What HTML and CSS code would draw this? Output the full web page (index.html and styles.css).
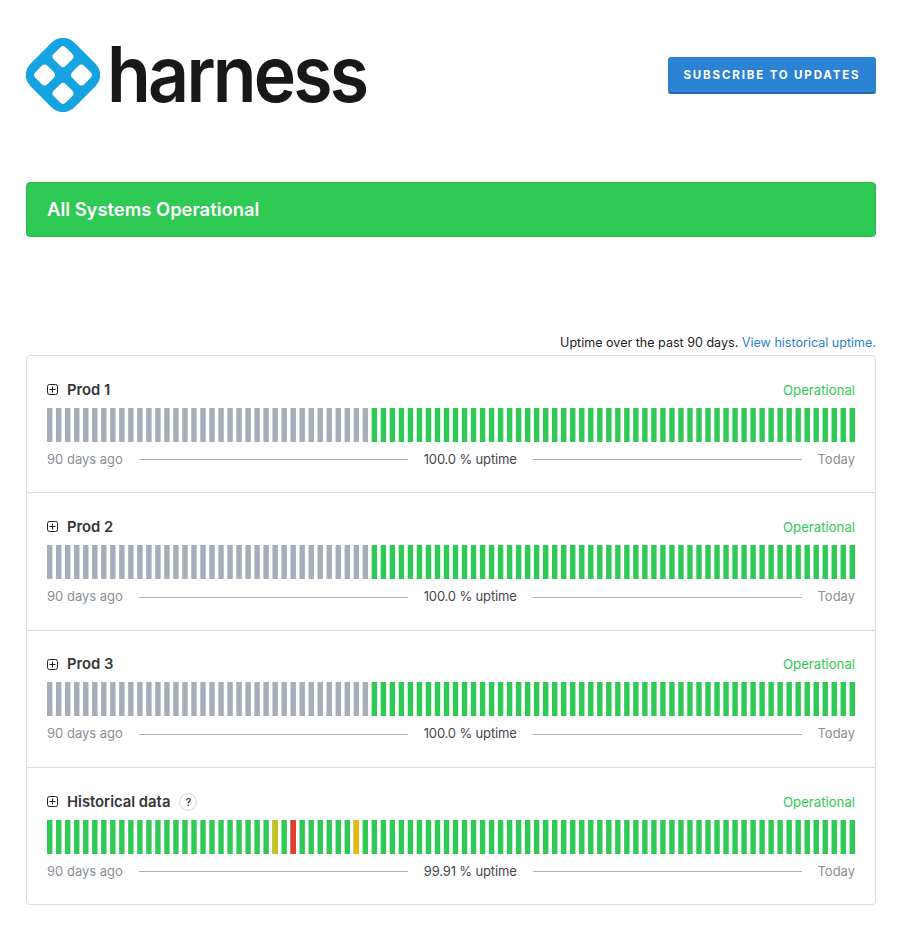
FILE: index.html
```html
<!DOCTYPE html>
<html lang="en">
<head>
<meta charset="utf-8">
<title>Harness Status</title>
<link rel="stylesheet" href="styles.css">
</head>
<body>
<svg class="defs" width="0" height="0" aria-hidden="true">
  <defs>
    <g id="b5"><rect x="0" width="3" height="34"/><rect x="5" width="3" height="34"/><rect x="10" width="3" height="34"/><rect x="15" width="3" height="34"/><rect x="20" width="3" height="34"/></g>
    <g id="b10"><use href="#b5"/><use href="#b5" x="25"/></g>
    <g id="b30"><use href="#b10"/><use href="#b10" x="50"/><use href="#b10" x="100"/></g>
    <g id="b90"><use href="#b30"/><use href="#b30" x="150"/><use href="#b30" x="300"/></g>
    <g id="plus"><rect x="0.5" y="0.5" width="10" height="10" rx="2" fill="none" stroke="#1f2024"/><path d="M5.5 2.5v6M2.5 5.5h6" stroke="#1f2024"/></g>
    <g id="prodbars">
      <g class="grey"><use href="#b30"/><use href="#b5" x="150"/><rect x="175" width="3" height="34"/></g>
      <g class="green"><rect x="180" width="3" height="34"/><rect x="185" width="3" height="34"/><rect x="190" width="3" height="34"/><rect x="195" width="3" height="34"/><use href="#b30" x="200"/><use href="#b10" x="350"/><use href="#b10" x="400"/></g>
    </g>
  </defs>
</svg>
<div class="page">
  <header class="top">
    <div class="logo">
      <svg class="logo-mark" width="74" height="74" viewBox="0 0 74 74">
        <g transform="translate(37 37) rotate(45)">
          <rect x="-31" y="-31" width="62" height="62" rx="16" fill="#16a3e2"/>
          <rect x="-21.5" y="-21.5" width="17" height="17" rx="4" fill="#fff"/>
          <rect x="4.5" y="-21.5" width="17" height="17" rx="4" fill="#fff"/>
          <rect x="-21.5" y="4.5" width="17" height="17" rx="4" fill="#fff"/>
          <rect x="4.5" y="4.5" width="17" height="17" rx="4" fill="#fff"/>
        </g>
      </svg>
      <span class="logo-text">harness</span>
    </div>
    <a class="subscribe" href="#">Subscribe to updates</a>
  </header>

  <div class="banner">All Systems Operational</div>

  <p class="uptime-note">Uptime over the past 90 days. <a href="#">View historical uptime.</a></p>

  <section class="card">
    <article class="row">
      <div class="row-head">
        <svg class="plus" width="11" height="11" viewBox="0 0 11 11"><use href="#plus"/></svg>
        <span class="name">Prod 1</span>
        <span class="status">Operational</span>
      </div>
      <svg class="bars" viewBox="0 0 448 34" preserveAspectRatio="none"><use href="#prodbars"/></svg>
      <div class="row-foot"><span>90 days ago</span><i class="rule"></i><span class="pct">100.0 % uptime</span><i class="rule"></i><span>Today</span></div>
    </article>
    <article class="row">
      <div class="row-head">
        <svg class="plus" width="11" height="11" viewBox="0 0 11 11"><use href="#plus"/></svg>
        <span class="name">Prod 2</span>
        <span class="status">Operational</span>
      </div>
      <svg class="bars" viewBox="0 0 448 34" preserveAspectRatio="none"><use href="#prodbars"/></svg>
      <div class="row-foot"><span>90 days ago</span><i class="rule"></i><span class="pct">100.0 % uptime</span><i class="rule"></i><span>Today</span></div>
    </article>
    <article class="row">
      <div class="row-head">
        <svg class="plus" width="11" height="11" viewBox="0 0 11 11"><use href="#plus"/></svg>
        <span class="name">Prod 3</span>
        <span class="status">Operational</span>
      </div>
      <svg class="bars" viewBox="0 0 448 34" preserveAspectRatio="none"><use href="#prodbars"/></svg>
      <div class="row-foot"><span>90 days ago</span><i class="rule"></i><span class="pct">100.0 % uptime</span><i class="rule"></i><span>Today</span></div>
    </article>
    <article class="row">
      <div class="row-head">
        <svg class="plus" width="11" height="11" viewBox="0 0 11 11"><use href="#plus"/></svg>
        <span class="name">Historical data</span>
        <span class="help">?</span>
        <span class="status">Operational</span>
      </div>
      <svg class="bars" viewBox="0 0 448 34" preserveAspectRatio="none"><use href="#b90" class="green"/><rect class="olive" x="125" width="3" height="34"/><rect class="red" x="135" width="3" height="34"/><rect class="amber" x="170" width="3" height="34"/></svg>
      <div class="row-foot"><span>90 days ago</span><i class="rule"></i><span class="pct">99.91 % uptime</span><i class="rule"></i><span>Today</span></div>
    </article>
  </section>
</div>
</body>
</html>
```
FILE: styles.css
```css
* { box-sizing: border-box; }
html, body { margin: 0; padding: 0; background: #fff; }
body {
  font-family: "Inter", "Lato", "Liberation Sans", sans-serif;
  color: #33363b;
}
.defs { display: block; height: 0; }
.page { width: 850px; margin-left: 26px; }

.top {
  display: flex;
  justify-content: space-between;
  align-items: flex-start;
  padding-top: 38px;
  height: 182px;
}
.logo { display: flex; align-items: center; height: 74px; }
.logo-mark { display: block; flex: none; }
.logo-text {
  font-family: "Inter", "Liberation Sans", sans-serif;
  font-size: 77px;
  font-weight: 600;
  line-height: 74px;
  letter-spacing: -3px;
  color: #1a1718;
  margin-left: 7px;
  margin-top: -3px;
  transform: scaleX(0.93);
  transform-origin: left center;
}
.subscribe {
  display: block;
  width: 208px;
  height: 37px;
  margin-top: 19px;
  background: #2c82d3;
  border-bottom: 2px solid #2768a8;
  border-radius: 3px;
  color: #fff;
  font-size: 11.5px;
  font-weight: 700;
  line-height: 36px;
  letter-spacing: 1.85px;
  text-align: center;
  text-transform: uppercase;
  text-decoration: none;
}

.banner {
  height: 55px;
  padding-left: 20px;
  background: #2fca56;
  border: 1px solid #2ab84e;
  border-radius: 4px;
  color: #fff;
  font-size: 18.4px;
  font-weight: 600;
  line-height: 52px;
}

.uptime-note {
  margin: 96px 0 2px;
  height: 20px;
  font-size: 12.55px;
  line-height: 20px;
  text-align: right;
  color: #1f2024;
}
.uptime-note a { color: #2c82d3; text-decoration: none; }

.card { border: 1px solid #dcdcdc; border-radius: 4px; }
.row {
  height: 137.3px;
  padding: 23.7px 20px 0;
  border-bottom: 1px solid #dcdcdc;
}
.row:last-child { border-bottom: 0; height: 136.4px; }
.row-head {
  display: flex;
  align-items: center;
  height: 20px;
}
.plus { display: block; flex: none; margin-right: 9px; }
.name { font-size: 14.8px; font-weight: 600; color: #33363b; }
.help {
  width: 18px;
  height: 18px;
  margin-left: 9px;
  border: 1px solid #d8d8d8;
  border-radius: 50%;
  font-size: 10px;
  font-weight: 600;
  line-height: 16px;
  text-align: center;
}
.status { margin-left: auto; font-size: 13.2px; color: #2fca56; }

.bars { display: block; width: 808px; height: 34px; margin-top: 8px; }
.green { fill: #2fca56; }
.grey { fill: #a5adba; }
.olive { fill: #c9bf1f; }
.red { fill: #e8392f; }
.amber { fill: #e6b80f; }

.row-foot {
  display: flex;
  align-items: center;
  height: 20px;
  margin-top: 7.15px;
  font-size: 13px;
  color: #8c8f94;
}
.rule { flex: 1; height: 1px; margin: 2px 15.5px 0 16px; background: #b0b0b0; }
.pct { letter-spacing: -0.15px; color: #44474c; }
```
